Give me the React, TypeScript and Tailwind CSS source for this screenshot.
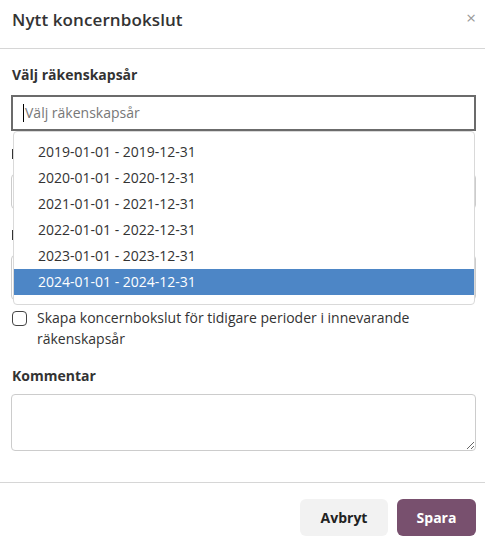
const years = [
  "2019-01-01 - 2019-12-31",
  "2020-01-01 - 2020-12-31",
  "2021-01-01 - 2021-12-31",
  "2022-01-01 - 2022-12-31",
  "2023-01-01 - 2023-12-31",
  "2024-01-01 - 2024-12-31",
];

export default function App() {
  return (
    <div className="flex h-[543px] w-[485px] flex-col bg-white font-['Open_Sans',sans-serif] text-[#333]">
      <div className="flex h-[49px] shrink-0 items-center justify-between border-b border-[#d6d6d6] pl-3 pr-[9px]">
        <h1 className="-mt-[8px] text-[17px] font-semibold tracking-[0.1px]">Nytt koncernbokslut</h1>
        <button className="-mt-[13px] text-[17px] leading-none text-[#999]">×</button>
      </div>

      <div className="flex-1 pl-[11px] pr-[9px] pt-[16px]">
        <div className="relative">
          <label className="block pl-px text-sm font-bold leading-5">Välj räkenskapsår</label>
          <div className="mt-[10px] flex h-[36px] items-center border-2 border-[#6b6b6b] pl-[10px] text-sm text-[#777]">
            <span className="mr-px h-[18px] w-px bg-black" />
            Välj räkenskapsår
          </div>

          {/* fields hidden under the open list */}
          <div className="mt-[13px] flex h-5 items-center pl-px">
            <span className="h-[10px] w-[3px] bg-[#333]" />
          </div>
          <div className="mt-[10px] h-[35px] rounded border border-[#ccc]" />

          <div className="mt-[16px] flex h-5 items-center pl-px">
            <span className="h-[10px] w-[3px] bg-[#333]" />
          </div>
          <div className="mt-[10px] h-[45px] rounded border border-[#ccc]" />

          <div className="absolute left-[2px] right-px top-[66px] z-10 rounded border border-[#d9d9d9] bg-white pb-[9px] pt-[7px]">
            {years.map((y, i) => (
              <div
                key={y}
                className={
                  i === years.length - 1
                    ? "flex h-[26px] items-center bg-[#4d86c6] pl-6 text-sm text-white"
                    : "flex h-[26px] items-center pl-6 text-sm text-[#333]"
                }
              >
                {y}
              </div>
            ))}
          </div>
        </div>

        <div className="mt-[7px] flex items-start gap-[10px] pl-px">
          <span className="mt-[4px] h-[15px] w-[15px] shrink-0 rounded-[4px] border border-[#444]" />
          <span className="text-sm font-medium leading-[21px]">
            Skapa koncernbokslut för tidigare perioder i innevarande räkenskapsår
          </span>
        </div>

        <label className="mt-[17px] block pl-px text-sm font-bold leading-5">Kommentar</label>
        <textarea className="mt-[8px] block h-[57px] w-full rounded border border-[#ccc] text-sm" />
      </div>

      <div className="flex h-[61px] shrink-0 items-start justify-end gap-[9px] border-t border-[#d6d6d6] pr-[9px] pt-[16px]">
        <button className="h-[37px] w-[88px] rounded-md bg-[#f2f2f2] text-sm font-bold text-[#222]">Avbryt</button>
        <button className="h-[37px] w-[79px] rounded-md bg-[#78506e] text-sm font-bold text-white">Spara</button>
      </div>
    </div>
  );
}
